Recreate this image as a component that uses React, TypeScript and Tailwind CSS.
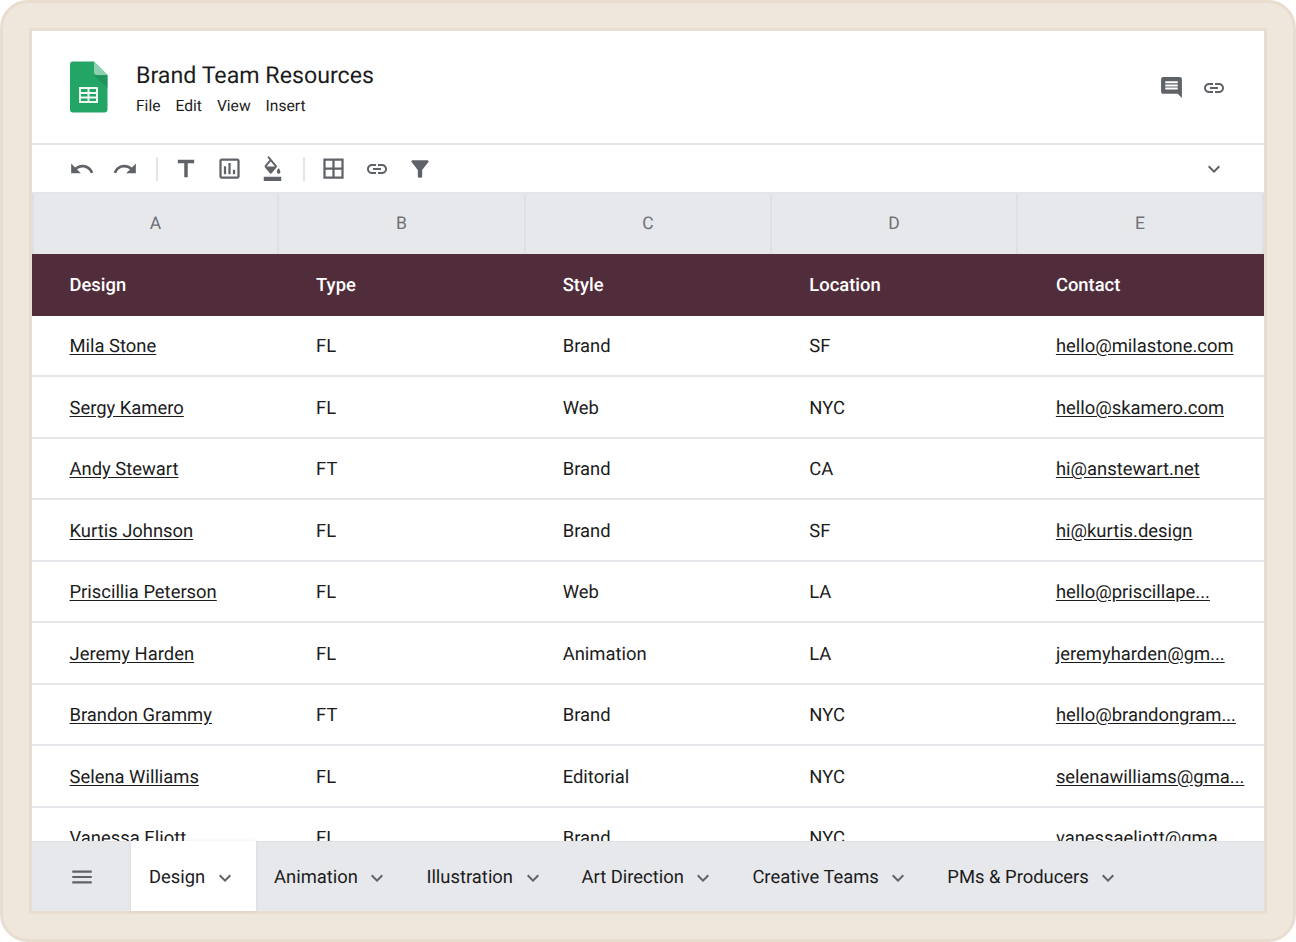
import { MdBorderAll, MdComment, MdExpandMore, MdFilterAlt, MdFormatColorFill, MdLink, MdMenu, MdOutlineInsertChart, MdRedo, MdTitle, MdUndo } from "react-icons/md";

const rows = [
  ["Mila Stone", "FL", "Brand", "SF", "hello@milastone.com"],
  ["Sergy Kamero", "FL", "Web", "NYC", "hello@skamero.com"],
  ["Andy Stewart", "FT", "Brand", "CA", "hi@anstewart.net"],
  ["Kurtis Johnson", "FL", "Brand", "SF", "hi@kurtis.design"],
  ["Priscillia Peterson", "FL", "Web", "LA", "hello@priscillape..."],
  ["Jeremy Harden", "FL", "Animation", "LA", "jeremyharden@gm..."],
  ["Brandon Grammy", "FT", "Brand", "NYC", "hello@brandongram..."],
  ["Selena Williams", "FL", "Editorial", "NYC", "selenawilliams@gma..."],
  ["Vanessa Eliott", "FL", "Brand", "NYC", "vanessaeliott@gma..."],
];

const tabs = ["Animation", "Illustration", "Art Direction", "Creative Teams", "PMs & Producers"];

function SheetsLogo() {
  return (
    <svg width="38" height="52" viewBox="0 0 38 52">
      <path d="M3 0.5H24L37.5 14V48.5a3 3 0 0 1-3 3H3a3 3 0 0 1-3-3V3.500a3 3 0 0 1 3-3z" fill="#23a566" />
      <path d="M24 14.500L37.500 27V14.500z" fill="#1c8a55" opacity="0.6" />
      <path d="M24 0.500L37.500 14H27a3 3 0 0 1-3-3z" fill="#8ed1b1" />
      <path d="M9 26h19v16H9z M11 28v3h6.500v-3z M19.500 28v3H26v-3z M11 33v2.500h6.500V33z M19.500 33v2.500H26V33z M11 37.500V40h6.500v-2.500z M19.500 37.500V40H26v-2.500z" fill="#eef8f3" fillRule="evenodd" />
    </svg>
  );
}

export default function App() {
  return (
    <div className="w-[1296px] h-[942px] overflow-hidden bg-white font-['Roboto',sans-serif] text-[18.400px] text-[#1c1c1c] [text-rendering:geometricPrecision]">
      <div className="w-full h-full rounded-[28px] border-[3px] border-[#e9ddcf] bg-[#efe6dc] pl-[26px] pr-[29px] pt-[25px]">
        <div className="w-[1238px] h-[886px] border-[3px] border-[#e9ddcf]">
          <div className="flex flex-col w-[1232px] h-[880px] bg-white">
            <div className="flex items-center h-[112px] pl-[38px] pr-[38px] shrink-0">
              <SheetsLogo />
              <div className="ml-[28px] flex-1 pt-[2px]">
                <div className="text-[23.200px] leading-[30px]">Brand Team Resources</div>
                <div className="flex gap-[15px] mt-[5px] text-[15.600px] leading-[22px]">
                  <span>File</span>
                  <span>Edit</span>
                  <span>View</span>
                  <span>Insert</span>
                </div>
              </div>
              <MdComment size={25} className="text-[#5f6368] mr-[18px] mt-[1px]" />
              <MdLink size={24} className="text-[#5f6368] mt-[1px]" />
            </div>

            <div className="flex items-center h-[51px] shrink-0 border-t-2 border-b-2 border-[#e4e5e9] pl-[37px] pr-[38px] text-[#5f6368]">
              <MdUndo size={26} />
              <MdRedo size={26} className="ml-[17px]" />
              <div className="w-[2px] h-[24px] bg-[#e4e5e9] ml-[18px] mr-[14px]" />
              <MdTitle size={28} />
              <MdOutlineInsertChart size={27} className="ml-[16px]" />
              <MdFormatColorFill preserveAspectRatio="none" className="ml-[19px] w-[21px] h-[25px]" />
              <div className="w-[2px] h-[24px] bg-[#e4e5e9] ml-[20px] mr-[15px]" />
              <MdBorderAll size={27} />
              <MdLink size={24} className="ml-[18px]" />
              <MdFilterAlt size={26} className="ml-[18px]" />
              <MdExpandMore size={24} className="ml-auto" />
            </div>

            <div className="grid grid-cols-[245px_247px_246px_246px_246px] h-[60px] shrink-0 border-l-2 border-[#dfe0e4] bg-[#e7e8ec] text-[#6e7176] text-[17.500px]">
              {["A", "B", "C", "D", "E"].map((c) => (
                <div key={c} className="flex items-center justify-center border-r-2 border-[#dfe0e4]">
                  {c}
                </div>
              ))}
            </div>

            <div className="grid grid-cols-[repeat(5,246.600px)] items-center h-[61.500px] pt-[2px] shrink-0 bg-[#512d3c] text-white font-medium">
              {["Design", "Type", "Style", "Location", "Contact"].map((c) => (
                <div key={c} className="pl-[37.500px]">{c}</div>
              ))}
            </div>

            <div className="flex-1 min-h-0 overflow-hidden">
              {rows.map((r) => (
                <div key={r[0]} className="grid grid-cols-[repeat(5,246.600px)] items-center h-[61.500px] pt-[4px] border-b-2 border-[#e6e7ea]">
                  {r.map((cell, i) => (
                    <div key={i} className="pl-[37.500px] whitespace-nowrap">
                      <span className={i === 0 || i === 4 ? "underline underline-offset-2" : ""}>{cell}</span>
                    </div>
                  ))}
                </div>
              ))}
            </div>

            <div className="flex h-[70px] shrink-0 bg-[#e7e8ec] border-t border-[#e0e1e5] relative">
              <div className="w-[99px] flex items-center justify-center">
                <MdMenu size={26} className="text-[#5f6368]" />
              </div>
              <div className="flex items-center w-[125px] -mt-[1px] pt-[3px] pl-[18px] bg-white shadow-[0_0_4px_rgba(0,0,0,0.08)]">
                <span>Design</span>
                <MdExpandMore size={24} className="ml-[8px] text-[#5f6368]" />
              </div>
              {tabs.map((t) => (
                <div key={t} className="flex items-center pt-[2px] pl-[18px] pr-[19px]">
                  <span>{t}</span>
                  <MdExpandMore size={24} className="ml-[7.500px] text-[#5f6368]" />
                </div>
              ))}
            </div>
          </div>
        </div>
      </div>
    </div>
  );
}
